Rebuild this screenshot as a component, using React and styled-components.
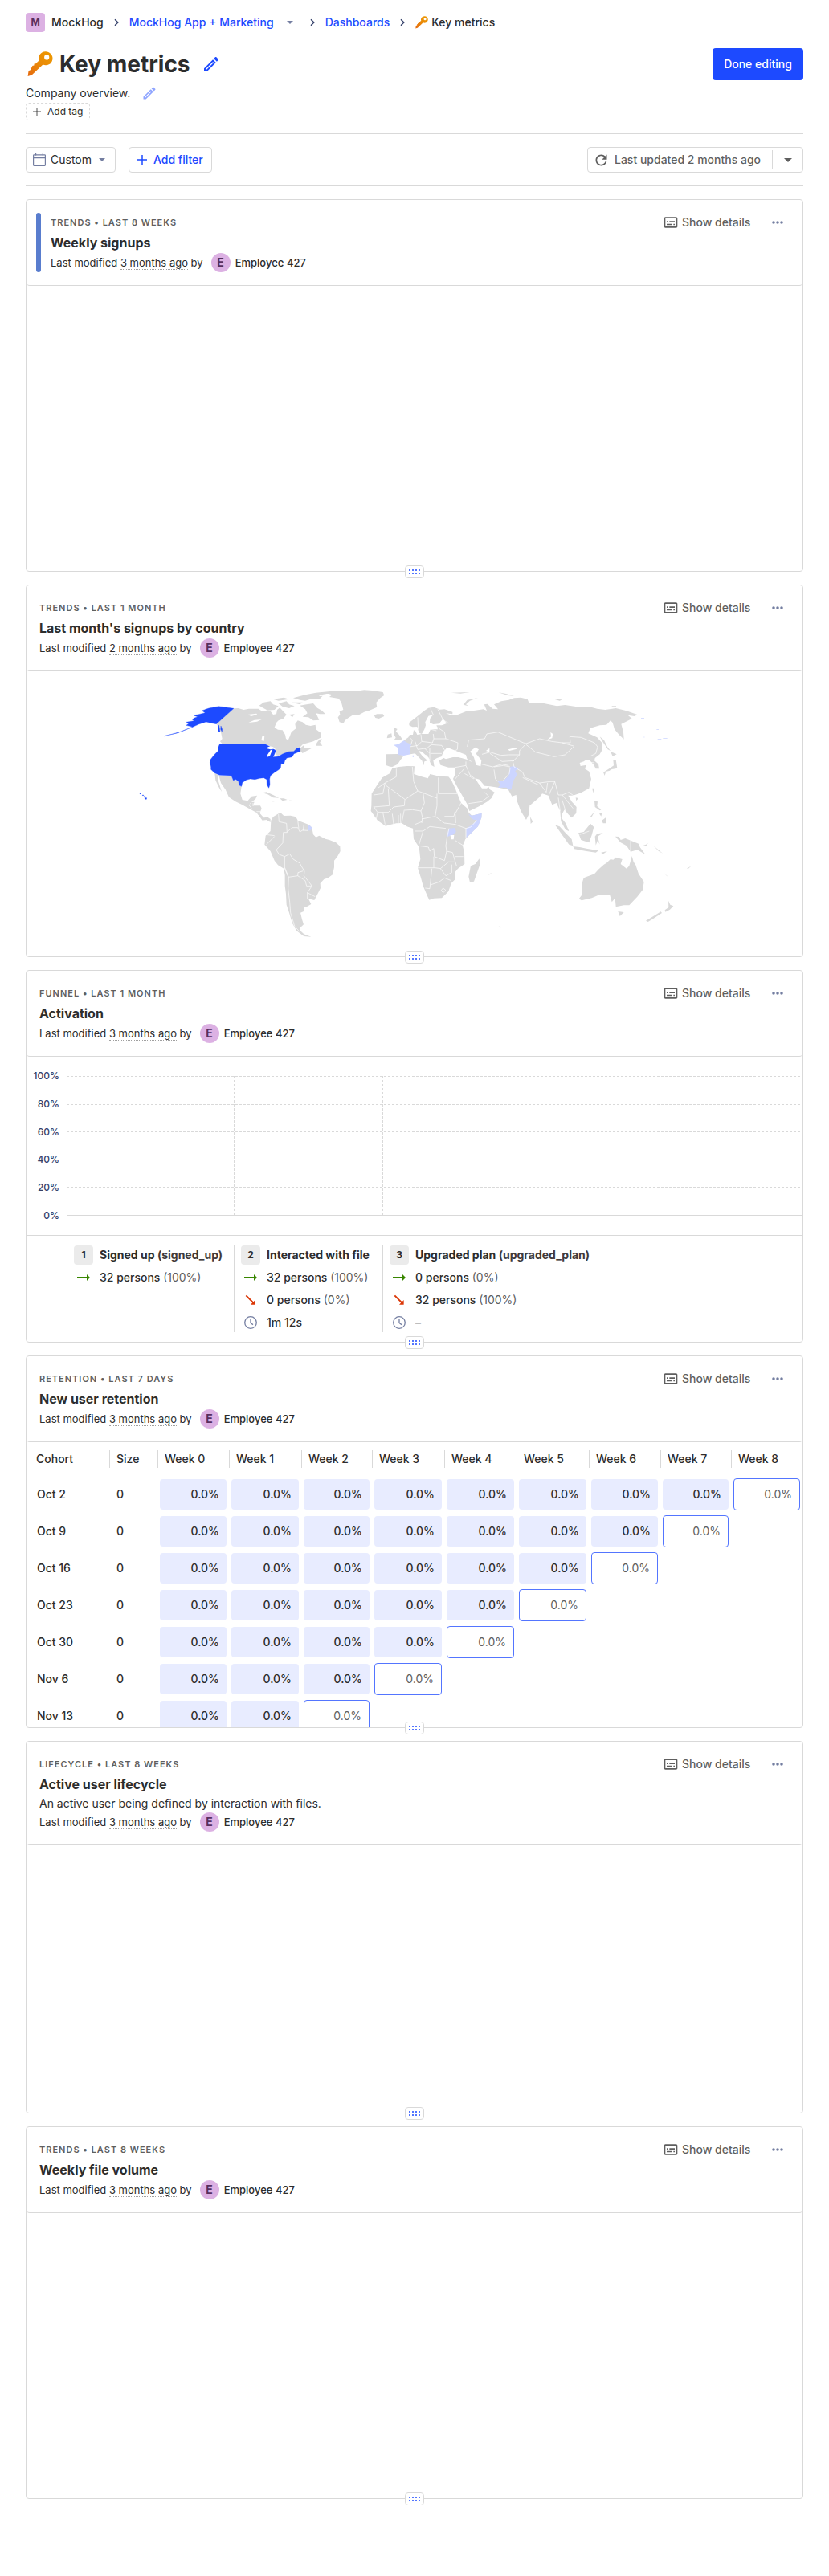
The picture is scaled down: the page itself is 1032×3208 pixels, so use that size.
import React from "react";
import styled, { createGlobalStyle, css } from "styled-components";

const c = {
  text: "#2d2d2d",
  muted: "#5f5f5f",
  blue: "#1d4aff",
  blueLight: "#5375ff",
  mutedAlt: "#35416b",
  icon: "#747ea1",
  border: "#d9d9d9",
  side: "#ebebeb",
  land: "#d9d9d9",
  landLight: "#ccd5ff",
  cell: "#e8ecff",
  lilac: "#dcb1e3",
  lilacDark: "#572e5e",
};

const GlobalStyle = createGlobalStyle`
  *, *::before, *::after { box-sizing: border-box; }
  body {
    margin: 0;
    background: #fff;
    color: ${c.text};
    font-family: Inter, "Liberation Sans", sans-serif;
    font-size: 14px;
    line-height: 20px;
  }
  button {
    font: inherit;
    color: inherit;
    background: none;
    border: 0;
    padding: 0;
    cursor: pointer;
  }
  svg { display: block; flex: none; }
`;

const Page = styled.main`
  padding: 16px 32px 96px;
`;

/* ---------- Breadcrumbs ---------- */

const Breadcrumbs = styled.nav`
  display: flex;
  align-items: center;
  gap: 8px;
  height: 24px;
  margin-bottom: 20px;
  font-weight: 500;
  color: ${c.mutedAlt};
`;

const Crumb = styled.span`
  display: flex;
  align-items: center;
  gap: 4px;
  color: ${c.text};
`;

const CrumbLink = styled.a`
  color: ${c.blue};
  text-decoration: none;
`;

const CaretButton = styled.button`
  display: flex;
  justify-content: center;
  width: 24px;
  color: ${c.icon};
`;

const Avatar = styled.span`
  display: inline-flex;
  flex: none;
  align-items: center;
  justify-content: center;
  width: 24px;
  height: 24px;
  border-radius: ${(p) => (p.$square ? "4px" : "50%")};
  background: ${c.lilac};
  color: ${c.lilacDark};
  font-size: ${(p) => (p.$square ? "12px" : "14px")};
  font-weight: 700;
`;

/* ---------- Page header ---------- */

const PageHeader = styled.header`
  padding-bottom: 16px;
  border-bottom: 1px solid ${c.border};
`;

const TitleRow = styled.div`
  display: flex;
  align-items: center;
  gap: 14px;
  height: 40px;
`;

const Title = styled.h1`
  display: flex;
  align-items: center;
  gap: 8px;
  margin: 0;
  padding-left: 2px;
  font-size: 28px;
  line-height: 40px;
  font-weight: 700;
`;

const IconButton = styled.button`
  display: flex;
  color: ${(p) => (p.$soft ? "#8ea4ff" : c.blue)};
`;

const PrimaryButton = styled.button`
  height: 40px;
  min-width: 113px;
  margin-left: auto;
  padding: 0 12px;
  border-radius: 4px;
  background: ${c.blue};
  color: #fff;
  font-weight: 500;
`;

const Description = styled.div`
  display: flex;
  align-items: center;
  gap: 14px;
  height: 24px;
  margin-top: 4px;
`;

const TagButton = styled.button`
  display: flex;
  align-items: center;
  gap: 8px;
  height: 22px;
  padding: 0 8px;
  border: 1px dashed ${c.border};
  border-radius: 4px;
  font-size: 12px;
`;

/* ---------- Toolbar ---------- */

const Toolbar = styled.section`
  display: flex;
  gap: 16px;
  padding: 16px 0;
  margin-bottom: 16px;
  border-bottom: 1px solid ${c.border};
`;

const ToolButton = styled.button`
  display: flex;
  align-items: center;
  gap: 6px;
  height: 32px;
  min-width: 112px;
  padding: 0 12px 0 8px;
  border: 1px solid ${c.border};
  border-radius: 4px;
  ${(p) =>
    p.$accent &&
    css`
      gap: 8px;
      min-width: 104px;
      padding: 0 8px 0 10px;
      color: ${c.blue};
      font-weight: 500;
    `}
`;

const Tinted = styled.span`
  display: flex;
  margin-left: ${(p) => (p.$end ? "auto" : "0")};
  color: ${c.icon};
`;

const SplitButton = styled.div`
  display: flex;
  align-items: center;
  height: 32px;
  min-width: 269px;
  margin-left: auto;
  border: 1px solid ${c.border};
  border-radius: 4px;
  color: ${c.muted};
  font-weight: 500;
`;

const SplitMain = styled.button`
  display: flex;
  flex: 1;
  align-items: center;
  gap: 6px;
  padding: 0 8px 0 6px;
`;

const SplitSide = styled.button`
  display: flex;
  align-items: center;
  justify-content: center;
  width: 38px;
  height: 24px;
  border-left: 1px solid ${c.border};
`;

/* ---------- Cards ---------- */

const Cards = styled.div`
  display: grid;
  gap: 16px;
`;

const Card = styled.article`
  position: relative;
  display: flex;
  flex-direction: column;
  height: 464px;
  min-width: 0;
  border: 1px solid ${c.border};
  border-radius: 4px;
`;

const CardHeader = styled.header`
  display: flex;
  gap: 12px;
  padding: 16px;
  padding-left: ${(p) => (p.$ribbon ? "12px" : "16px")};
  border-bottom: 1px solid ${c.border};
  border-radius: 4px;
`;

const Ribbon = styled.div`
  width: 6px;
  border-radius: 3px;
  background: #597dce;
`;

const CardInfo = styled.div`
  flex: 1;
  min-width: 0;
`;

const MetaRow = styled.div`
  display: flex;
  align-items: center;
  justify-content: space-between;
  height: 24px;
`;

const Meta = styled.h5`
  margin: 0;
  color: ${c.muted};
  font-size: 11px;
  font-weight: 600;
  letter-spacing: 1px;
  text-transform: uppercase;
`;

const CardActions = styled.div`
  display: flex;
  align-items: center;
  gap: 22px;
  padding-right: 8px;
`;

const DetailsButton = styled.button`
  display: flex;
  align-items: center;
  gap: 4px;
  min-width: 114px;
  color: ${c.muted};
  font-weight: 500;
`;

const MoreButton = styled.button`
  display: flex;
  color: ${c.icon};
`;

const CardTitle = styled.h4`
  margin: 0;
  font-size: 16px;
  line-height: 26px;
  font-weight: 700;
`;

const CardDescription = styled.p`
  margin: 0;
  line-height: 22px;
`;

const Modified = styled.div`
  display: flex;
  align-items: center;
  gap: 10px;
  height: 24px;
  font-size: 13px;
`;

const Ago = styled.span`
  border-bottom: 1px dotted #a0a0a0;
`;

const Author = styled.span`
  display: flex;
  align-items: center;
  gap: 6px;
  font-weight: 500;
`;

const CardBody = styled.div`
  flex: 1;
  min-height: 0;
  overflow: hidden;
`;

const Handle = styled.button`
  position: absolute;
  left: calc(50% - 12px);
  bottom: -9px;
  display: grid;
  place-items: center;
  width: 24px;
  height: 16px;
  border: 1px solid ${c.border};
  border-radius: 4px;
  background: #fff;
  color: ${c.blueLight};
`;

/* ---------- Funnel ---------- */

const funnelColumns = "50px 208px 185px 1fr";

const FunnelChart = styled.div`
  display: grid;
  grid-template-columns: 50px 1fr;
  border-bottom: 1px solid ${c.border};
`;

const Axis = styled.div`
  display: flex;
  flex-direction: column;
  justify-content: space-between;
  padding: 16px 9px 16px 0;
  color: ${c.mutedAlt};
  font-size: 12px;
  line-height: 16px;
  font-weight: 500;
  text-align: right;
`;

const Plot = styled.div`
  padding: 24px 0;
`;

const Legend = styled.div`
  display: grid;
  grid-template-columns: ${funnelColumns};
  padding: 12px 0;
`;

const Step = styled.section`
  display: grid;
  align-content: start;
  gap: 4px;
  padding-left: 8px;
  border-left: 1px solid ${c.border};
  white-space: nowrap;
`;

const StepRow = styled.div`
  display: flex;
  align-items: center;
  gap: 8px;
  height: 24px;
  font-weight: ${(p) => (p.$head ? 700 : 500)};
`;

const StepNumber = styled.span`
  display: flex;
  align-items: center;
  justify-content: center;
  width: 24px;
  height: 24px;
  border-radius: 4px;
  background: ${c.side};
  font-size: 12px;
`;

const Share = styled.span`
  color: ${c.muted};
  font-weight: 400;
`;

const EventKey = styled.span`
  color: #403939;
`;

/* ---------- Retention ---------- */

const RetentionTable = styled.table`
  width: 100%;
  table-layout: fixed;
  border-collapse: collapse;
  font-weight: 500;
`;

const HeadCell = styled.th`
  height: 42px;
  padding: 0;
  font-weight: 500;
  text-align: left;
`;

const HeadLabel = styled.div`
  height: 22px;
  padding-left: ${(p) => (p.$first ? 12 : 8)}px;
  border-left: ${(p) => (p.$first ? "0" : `1px solid ${c.border}`)};
  line-height: 22px;
`;

const LabelCell = styled.td`
  height: 46px;
  padding: 0 0 0 ${(p) => (p.$first ? 13 : 9)}px;
`;

const ValueCell = styled.td`
  height: 46px;
  padding: 0 3px;
`;

const Value = styled.div`
  height: 38px;
  padding: 0 9px;
  border-radius: 4px;
  background: ${c.cell};
  line-height: 38px;
  text-align: right;
  ${(p) =>
    p.$ongoing &&
    css`
      height: 40px;
      border: 1px solid ${c.blueLight};
      background: #fff;
      color: ${c.muted};
      font-weight: 400;
    `}
`;

/* ---------- Icons ---------- */

const Key = ({ size }) => (
  <svg width={size} height={size} viewBox="0 0 32 32" role="img" aria-label="Key">
    <defs>
      <linearGradient id={`key-${size}`} x1="1" y1="0" x2="0" y2="1">
        <stop offset="0" stopColor="#ed9a00" />
        <stop offset="0.5" stopColor="#ea8a08" />
        <stop offset="1" stopColor="#e5690f" />
      </linearGradient>
    </defs>
    <path
      fill={`url(#key-${size})`}
      fillRule="evenodd"
      d="M22.500 .3a8.500 8.500 0 0 0-8 11.300L10.600 15.200 8.600 15.600 8.400 17.500 6.200 18 6 20 3.800 20.800 4.400 23 1.600 24.200.6 30.900 5.600 29.600 19.400 16.500a8.500 8.500 0 1 0 3.100-16.200zM24.200 4.300a3.100 3.100 0 1 1 0 6.200 3.100 3.100 0 0 1 0-6.200z"
    />
  </svg>
);

const Chevron = () => (
  <svg width="16" height="16" viewBox="0 0 16 16" fill="none" stroke="currentColor" strokeWidth="1.5" aria-hidden="true">
    <path d="M6 4.2 9.8 8 6 11.8" />
  </svg>
);

const Caret = ({ size = 8 }) => (
  <svg width={size} height={size / 2} viewBox="0 0 8 4" fill="currentColor" aria-hidden="true">
    <path d="M0 0h8L4 4z" />
  </svg>
);

const Pencil = ({ size }) => (
  <svg width={size} height={size} viewBox="0 0 24 24" fill="currentColor" aria-hidden="true">
    <path d="m14.06 9.02.92.92L5.92 19H5v-.92l9.06-9.06M17.66 3c-.25 0-.51.1-.7.29l-1.83 1.83 3.75 3.75 1.83-1.83a.996.996 0 0 0 0-1.41l-2.34-2.34c-.2-.2-.45-.29-.71-.29zm-3.6 3.19L3 17.25V21h3.75L17.81 9.94l-3.75-3.75z" />
  </svg>
);

const Plus = ({ size = 12, width = 1.5 }) => (
  <svg width={size} height={size} viewBox="0 0 12 12" fill="none" stroke="currentColor" strokeWidth={width} aria-hidden="true">
    <path d="M6 0v12M0 6h12" />
  </svg>
);

const Calendar = () => (
  <svg width="16" height="16" viewBox="0 0 16 16" fill="none" stroke="currentColor" strokeWidth="1.2" aria-hidden="true">
    <rect x="0.6" y="1.8" width="14.8" height="13.6" rx="0.8" />
    <path d="M.6 5.6h14.8M3.6 0v2.4M12.4 0v2.4" />
  </svg>
);

const Refresh = () => (
  <svg width="21" height="21" viewBox="0 0 24 24" fill="currentColor" aria-hidden="true">
    <path d="M17.65 6.35C16.2 4.9 14.21 4 12 4c-4.42 0-7.99 3.58-7.99 8s3.57 8 7.99 8c3.73 0 6.84-2.55 7.73-6h-2.08c-.82 2.33-3.04 4-5.65 4-3.31 0-6-2.69-6-6s2.69-6 6-6c1.66 0 3.14.69 4.22 1.78L13 11h7V4l-2.35 2.35z" />
  </svg>
);

const Subtitles = () => (
  <svg width="20" height="20" viewBox="0 0 24 24" fill="currentColor" aria-hidden="true">
    <path d="M20 4H4c-1.100 0-2 .9-2 2v12c0 1.100.9 2 2 2h16c1.100 0 2-.9 2-2V6c0-1.100-.9-2-2-2zm0 14H4V6h16v12zM6 10h2v2H6zm0 4h8v2H6zm10 0h2v2h-2zm-6-4h8v2h-8z" />
  </svg>
);

const Ellipsis = () => (
  <svg width="14" height="4" viewBox="0 0 14 4" fill="currentColor" aria-hidden="true">
    <circle cx="2" cy="2" r="1.8" />
    <circle cx="7" cy="2" r="1.8" />
    <circle cx="12" cy="2" r="1.8" />
  </svg>
);

const Arrow = ({ down }) => (
  <svg width="24" height="24" viewBox="0 0 24 24" fill={down ? "#db3707" : "#388600"} aria-hidden="true">
    <path transform={down ? "rotate(45 12 12)" : undefined} d="M16.01 11H4v2h12.01v3L20 12l-3.99-4z" />
  </svg>
);

const Clock = () => (
  <svg width="24" height="24" viewBox="0 0 24 24" fill="none" stroke={c.icon} strokeWidth="1.3" aria-hidden="true">
    <circle cx="12" cy="12" r="7.3" />
    <path d="M12 7.800v4.700l3 2.100" />
  </svg>
);

const GripDots = () => (
  <svg width="14" height="6" viewBox="0 0 14 6" fill="currentColor" aria-hidden="true">
    {[0, 4, 8, 12].map((x) => (
      <React.Fragment key={x}>
        <rect x={x} y="0" width="2" height="2" />
        <rect x={x} y="4" width="2" height="2" />
      </React.Fragment>
    ))}
  </svg>
);

/* ---------- World map ---------- */

const MapSvg = styled.svg`
  width: 100%;
  height: 100%;
`;

const west = [
  // Canada
  "M393,127 L410,126 430,132 450,128 470,128 485,128 500,138 515,134 530,137 540,150 552,148 555,132 565,124 580,140 590,150 578,165 560,172 552,180 545,198 558,206 575,208 585,225 588,240 596,245 602,232 608,215 625,202 622,185 632,172 650,178 662,188 680,192 698,188 700,205 718,218 720,235 690,250 660,258 650,262 640,272 632,272 617,287 598,288 575,297 560,304 550,300 552,288 545,275 530,268 512,261 352,261 342,250 350,240 345,215 333,190 328,185 Z",
  // Arctic islands
  "M640,116 L665,112 690,108 705,125 722,135 735,148 715,148 700,145 712,170 690,172 672,160 650,158 668,145 660,130 Z",
  "M488,116 L505,104 530,100 540,112 560,118 545,132 520,134 500,124 Z",
  "M615,88 L660,76 700,68 760,62 785,64 720,76 700,86 660,98 640,95 Z",
  "M560,108 L590,100 600,112 620,118 600,126 575,120 Z M540,92 L580,86 600,92 560,98 Z M610,104 L650,104 640,112 Z M600,150 L620,148 612,160 Z M665,84 L725,80 715,90 680,92 Z",
  // Atlantic provinces
  "M703,256 L712,244 722,240 715,254 724,266 700,266 Z M641,275 L655,264 655,276 683,276 660,288 650,294 641,286 Z",
  // Greenland
  "M733,68 L770,64 800,60 850,62 880,58 910,60 950,66 955,78 940,88 925,105 928,122 900,134 880,140 858,152 840,150 820,163 808,172 803,182 788,178 782,160 790,150 788,138 802,132 795,105 785,90 750,84 760,76 Z",
  "M917,152 L928,148 950,148 955,156 935,165 922,162 Z",
  // Mexico and Central America
  "M322,370 L340,378 384,380 392,395 398,393 410,400 414,414 422,418 418,445 425,468 445,472 460,455 480,452 474,466 462,474 455,480 450,488 425,487 400,475 375,458 362,430 345,405 338,380 332,378 336,400 348,438 338,422 325,395 Z",
  "M425,487 L450,488 460,476 470,476 465,490 492,490 497,500 490,518 505,535 520,533 530,540 530,552 515,543 500,545 478,516 445,498 Z",
  "M500,442 L515,439 540,450 562,461 540,460 520,448 Z M565,463 L580,463 593,468 575,472 Z M600,470h8v3h-8Z M534,472h10v3h-10Z",
  // South America
  "M532,545 L540,532 560,520 570,518 580,528 605,527 625,532 632,545 650,552 675,562 685,572 690,598 700,608 712,602 735,614 750,618 775,628 790,642 791,660 780,680 768,695 768,720 762,748 745,760 730,765 716,780 717,798 705,822 694,843 672,838 682,858 665,868 655,870 656,884 642,890 648,915 654,934 642,945 642,958 655,970 682,980 655,978 628,958 612,930 600,890 590,860 588,820 584,790 584,750 580,725 558,712 545,695 530,660 508,635 512,602 530,585 Z",
];

const westBorders =
  "M575,630 L552,655 562,672 583,680 602,670 615,690 640,705 645,715 657,735 655,752 668,768 685,790 668,815 697,830 M668,815 V838 M560,522 L562,550 590,556 592,590 578,590 576,630 M545,602 L512,598 M515,635 L545,605 M592,588 L612,572 632,572 640,588 650,582 672,583 M632,545 L636,575 M655,560 L652,583 M672,562 L670,583 M583,680 V720 L598,757 632,752 633,740 652,734 M582,722 L598,760 596,800 602,850 605,890 620,940 640,962 M632,752 L660,770 665,790 685,790 M450,488 L460,500 M465,480 V492 M478,512 H492";

const usa = [
  "M340,261 L512,261 525,268 540,277 550,284 545,298 540,308 560,306 575,297 598,288 617,287 628,276 641,272 641,287 618,296 611,308 591,312 584,322 580,335 570,332 568,348 562,355 545,366 530,378 527,390 528,412 524,424 517,412 516,392 505,386 490,388 472,392 455,390 440,394 425,404 422,418 414,414 410,398 398,391 392,397 384,378 340,376 322,368 308,355 308,345 304,330 306,318 320,300 335,285 336,270 Z",
  "M393,127 L360,122 337,119 300,126 274,135 286,143 262,149 243,153 258,158 245,163 238,168 244,173 216,178 225,183 216,190 240,196 262,186 290,177 312,182 328,185 Z",
  "M240,196 L210,207 185,218 133,230 165,222 200,212 Z M334,190 L338,190 342,214 336,212 Z M345,192 L350,205 349,214 344,205 Z M60,460 L68,461 67,466 62,466 Z M42,444h4v2h-4Z M52,450h4v2h-4Z M59,454h3v3h-3Z",
];

const westWater =
  "M512,275 L525,269 538,270 550,277 530,280 Z M530,283 L538,280 528,304 520,308 519,300 Z M445,150 L478,146 480,150 458,156 Z M448,180 L470,170 497,168 480,176 Z M500,228 L508,228 506,248 496,246 Z";

const east = [
  // Africa
  "M-35,350 L-10,345 20,342 48,343 46,372 70,380 98,388 106,372 140,380 175,382 186,395 200,425 212,455 222,480 245,500 250,515 262,527 299,518 298,535 285,568 255,597 238,615 228,640 234,665 235,708 210,725 198,740 200,765 185,780 175,810 150,835 120,836 103,842 95,825 80,790 72,760 60,722 70,690 65,645 45,615 42,575 20,568 0,555 -20,556 -45,562 -60,566 -90,545 -115,510 -113,490 -112,445 -90,410 -72,385 -45,370 Z",
  "M290,688 L293,708 270,773 255,776 250,755 258,715 275,708 Z",
  // Iberia
  "M-57,298 L-15,297 8,303 -5,320 -15,335 -35,345 -44,344 -60,338 Z",
  // Eurasia
  "M8,247 L25,235 30,225 42,225 45,208 52,212 58,225 75,222 100,222 108,205 135,205 130,190 108,190 150,190 168,183 150,160 135,132 160,130 190,140 190,148 165,145 185,152 210,150 240,138 270,135 290,132 305,130 318,135 308,112 320,110 340,128 360,130 345,112 372,100 400,95 420,88 445,86 470,92 475,105 520,106 550,112 580,118 610,114 650,120 700,120 730,128 760,132 800,126 840,136 880,150 870,156 845,152 860,165 835,178 820,185 828,215 830,242 812,225 795,205 788,180 780,172 765,188 740,190 705,200 697,220 730,235 748,255 750,280 740,298 722,312 720,322 735,335 738,352 725,352 718,338 700,318 690,318 680,325 665,330 668,342 690,338 684,352 700,362 708,390 700,425 670,442 655,447 640,452 622,452 635,475 653,495 652,518 635,535 622,522 608,505 600,520 596,535 612,555 625,585 612,580 595,548 592,510 578,480 562,487 548,452 525,445 515,458 478,490 474,525 465,543 445,510 430,470 428,450 412,455 398,430 360,422 330,418 310,416 290,392 275,388 285,405 300,425 318,425 325,420 330,430 347,440 335,462 320,475 290,492 253,510 245,485 225,450 205,415 192,390 200,372 200,347 175,347 145,338 140,322 160,310 210,308 245,318 240,300 170,272 155,290 150,306 132,312 118,320 122,345 110,338 100,310 75,288 62,285 78,305 97,322 85,325 82,340 76,322 50,295 33,298 Z",
  // Scandinavia
  "M28,180 L60,155 85,135 100,125 120,122 140,130 155,165 140,184 118,186 105,180 106,165 118,150 100,155 88,178 90,190 85,205 75,222 65,218 58,195 40,196 28,190 Z",
  // British Isles
  "M-28,198 L-16,204 -22,212 -12,222 -2,235 2,242 -30,246 -22,236 -30,222 Z M-52,224 L-38,220 -36,235 -55,238 Z",
  // Novaya Zemlya and Arctic specks
  "M230,113 L245,95 285,87 255,98 240,112 250,118 Z M362,67 L390,72 420,80 395,78 Z M570,92 L600,94 590,98 Z M785,118 h16 v3 h-16 Z M185,68 L255,66 220,71 Z",
  // Japan, Sakhalin
  "M740,232 L756,245 768,270 780,285 770,280 750,250 Z M780,288 L803,298 788,305 Z M790,318 L800,318 805,350 785,354 775,360 756,364 775,352 792,340 Z M752,362 L762,365 758,378 Z",
  // South and Southeast Asia islands
  "M480,532 L490,550 482,558 Z M712,425 L719,425 715,443 Z M650,460 L660,462 652,472 Z M720,472 L732,475 730,492 745,505 740,508 722,495 Z M748,545 L762,535 764,556 752,556 Z M738,520 L748,518 745,530 Z M705,530 L722,510 708,535 Z",
  "M573,562 L590,568 612,592 635,615 640,640 625,635 600,600 Z M640,642 L665,645 690,650 735,658 725,665 690,660 645,652 Z M660,592 L680,588 705,557 718,570 710,600 700,628 670,618 Z M722,605 L730,595 752,592 732,605 740,635 732,620 725,638 Z M745,665 L768,660 750,672 Z",
  // New Guinea
  "M798,605 L812,606 818,618 835,612 885,632 890,645 910,672 880,655 855,662 840,640 818,628 Z M900,640 L920,632 922,628 912,642 Z M980,742 L995,755 990,752 Z M1065,725 L1082,715 1070,726 Z M940,640 L975,668 960,660 Z",
  // Australia and New Zealand
  "M672,785 L680,760 720,745 735,728 755,710 765,704 780,690 790,692 800,683 824,690 818,708 840,725 850,715 860,678 866,700 874,712 885,745 905,775 900,805 880,830 850,862 830,862 800,868 797,835 785,850 778,825 740,822 710,835 672,844 662,838 672,825 Z",
  "M808,885 L830,888 815,903 Z M996,845 L1003,860 1015,865 1002,878 985,887 983,880 997,870 Z M968,886 L972,891 940,912 920,924 912,920 Z M362,940 L372,945 368,946 Z M322,748 L338,740 328,748 Z",
];

const eastBorders = [
  // Africa
  "M-20,352 V382 L-62,405 -90,425 M-62,412 L13,467 60,435 45,400 40,345 M-62,405 L-70,445 -105,450 M-50,425 L-46,490 -105,495 M-105,492 L-90,515 -50,515 -30,495 10,490 12,467 M60,435 L132,462 M137,385 V445 H208 M132,445 V490 L125,530 160,555 200,560 240,575 M80,440 L85,480 72,510 40,505 12,507 M72,510 L78,535 75,555 M75,540 L125,530 M50,560 L75,550 M222,480 L200,520 202,555 M160,530 H195 L200,510 M280,545 L258,570 240,575 V610 M50,585 H80 L105,568 165,575 M80,585 L65,635 M177,575 L170,606 165,640 168,660 190,665 M65,640 L100,645 105,660 120,650 122,680 160,695 168,660 M60,722 L125,722 145,725 175,700 200,700 M200,680 L230,680 M200,620 L232,640 M120,680 V722 M113,725 L105,800 88,798 M110,785 L140,775 160,760 185,770 M145,725 L165,752 187,740 V710 M155,798 L165,806 155,815 147,807 Z M190,665 L205,715 M-90,515 L-95,540 M-70,515 L-62,560 M-35,520 L-30,560 M-12,525 V555 M-4,520 V555 M10,505 L0,555",
  // Europe
  "M30,270 L60,265 75,250 72,225 M75,250 L115,255 120,240 118,222 M60,280 L95,275 110,262 150,265 165,290 M120,240 L165,240 210,255 208,280 190,290 M105,275 L105,320 M110,295 H150 M60,160 L62,205 M108,128 L118,150 M135,130 L155,170 175,182 M130,195 L160,215 165,240 M35,262 L40,245 30,235 M50,250 L60,280 M85,275 L105,295 M90,300 L110,325 M110,205 L130,210",
  // Asia
  "M245,270 L250,245 310,240 318,222 360,215 400,232 455,255 465,258 440,285 440,300 400,300 370,302 330,290 300,298 M465,258 L515,240 560,250 600,255 645,268 610,300 570,307 500,290 465,262 M600,255 L630,255 628,232 670,235 720,255 732,270 725,295 705,305 M440,300 L415,325 420,345 452,365 460,385 515,405 555,400 572,400 585,450 600,450 625,440 645,455 M452,385 L510,412 M515,405 L540,440 M545,405 L540,440 M572,400 L550,450 M585,460 L592,510 M600,450 L620,475 640,500 M600,470 L612,510 M298,335 L340,345 375,335 400,340 M330,295 L375,325 M345,355 L350,390 360,400 M200,347 L240,340 255,375 275,390 M200,390 L235,350 M235,370 L270,390 M250,482 L300,475 325,455 310,440 M345,345 L380,340 405,345 M225,305 L260,325 M240,325 L240,340 M375,325 L420,322 M705,328 L720,330 M855,618 V660 M665,598 L700,585 M380,395 L402,370 405,350",
].join(" ");

const eastWater =
  "M150,308 L155,288 172,278 190,285 200,293 225,298 224,310 195,308 165,316 Z M256,287 L275,272 288,280 278,296 298,320 295,343 278,338 270,310 Z M398,280 L425,273 430,278 402,285 Z M545,243 L558,232 556,216 565,222 562,238 Z M182,600 L196,600 194,616 184,616 Z M315,285 L328,275 328,290 Z";

const eastHighlights =
  "M-15,300 L-12,275 -30,263 -12,260 8,247 20,254 36,262 30,278 33,298 8,303 Z M250,522 L262,527 299,518 298,535 285,568 255,597 241,610 V575 L258,565 282,545 262,540 Z M177,575 L200,573 203,588 190,600 170,606 172,590 Z M405,345 L420,342 437,352 424,360 431,375 415,400 410,430 398,430 392,422 360,422 368,412 358,398 382,395 400,378 Z M41,302 h4 v6 h-4 Z M894,162 h12 v2 h-12 Z M952,205 h8 v2 h-8 Z M956,240 h14 v2 h-14 Z M976,237 h16 v2 h-16 Z M900,233 h8 v2 h-8 Z";

const WorldMap = () => (
  <MapSvg viewBox="33 836 966 355" role="img" aria-label="Signups by country">
    <g transform="translate(160 840) scale(.33333)">
      <path d={west.join(" ")} fill={c.land} />
      <path d={usa.join(" ")} fill={c.blue} stroke={c.blue} strokeWidth="1" />
      <path d={westWater} fill="#fff" />
      <path d={westBorders} fill="none" stroke="#fff" strokeWidth="2" />
      <path d="M673,562 L686,572 680,583 670,583 Z" fill={c.landLight} />
    </g>
    <g transform="translate(500 840) scale(.33333)">
      <path d={east.join(" ")} fill={c.land} />
      <path d={eastHighlights} fill={c.landLight} />
      <path d={eastWater} fill="#fff" />
      <path d={eastBorders} fill="none" stroke="#fff" strokeWidth="2" />
    </g>
  </MapSvg>
);

/* ---------- Funnel ---------- */

const GRID_HEIGHT = 174;

const steps = [
  { name: "Signed up", key: "(signed_up)", rows: [["in", "32 persons", "(100%)"]] },
  {
    name: "Interacted with file",
    rows: [
      ["in", "32 persons", "(100%)"],
      ["out", "0 persons", "(0%)"],
      ["time", "1m 12s"],
    ],
  },
  {
    name: "Upgraded plan",
    key: "(upgraded_plan)",
    rows: [
      ["in", "0 persons", "(0%)"],
      ["out", "32 persons", "(100%)"],
      ["time", "–"],
    ],
  },
];

const Funnel = () => (
  <>
    <FunnelChart>
      <Axis>
        {[100, 80, 60, 40, 20, 0].map((v) => (
          <span key={v}>{v}%</span>
        ))}
      </Axis>
      <Plot>
        <svg width="100%" height={GRID_HEIGHT} stroke={c.border} shapeRendering="crispEdges" aria-hidden="true">
          {[0, 35, 69, 104, 138].map((y) => (
            <line key={y} x1="0" x2="100%" y1={y + 0.5} y2={y + 0.5} strokeDasharray="3 2" />
          ))}
          <line x1="0" x2="100%" y1="173.5" y2="173.5" />
          <line x1="208.5" x2="208.5" y1="0" y2={GRID_HEIGHT} strokeDasharray="3 2" />
          <line x1="393.5" x2="393.5" y1="0" y2={GRID_HEIGHT} strokeDasharray="3 2" />
        </svg>
      </Plot>
    </FunnelChart>
    <Legend>
      <div />
      {steps.map((s, i) => (
        <Step key={s.name}>
          <StepRow $head>
            <StepNumber>{i + 1}</StepNumber>
            <span>
              {s.name} {s.key && <EventKey>{s.key}</EventKey>}
            </span>
          </StepRow>
          {s.rows.map(([kind, label, share]) => (
            <StepRow key={kind}>
              {kind === "time" ? <Clock /> : <Arrow down={kind === "out"} />}
              <span>
                {label} {share && <Share>{share}</Share>}
              </span>
            </StepRow>
          ))}
        </Step>
      ))}
    </Legend>
  </>
);

/* ---------- Retention ---------- */

const columnWidths = [103, 60, 89, 90, 88, 90, 90, 90, 89, 88, 89];
const cohorts = ["Oct 2", "Oct 9", "Oct 16", "Oct 23", "Oct 30", "Nov 6", "Nov 13"];

const Retention = () => (
  <RetentionTable>
    <colgroup>
      {columnWidths.map((w, i) => (
        <col key={i} width={w} />
      ))}
    </colgroup>
    <thead>
      <tr>
        <HeadCell>
          <HeadLabel $first>Cohort</HeadLabel>
        </HeadCell>
        <HeadCell>
          <HeadLabel>Size</HeadLabel>
        </HeadCell>
        {Array.from({ length: 9 }, (_, i) => (
          <HeadCell key={i}>
            <HeadLabel>Week {i}</HeadLabel>
          </HeadCell>
        ))}
      </tr>
    </thead>
    <tbody>
      {cohorts.map((name, row) => (
        <tr key={name}>
          <LabelCell $first>{name}</LabelCell>
          <LabelCell>0</LabelCell>
          {Array.from({ length: 9 }, (_, i) => (
            <ValueCell key={i}>{i <= 8 - row && <Value $ongoing={i === 8 - row}>0.0%</Value>}</ValueCell>
          ))}
        </tr>
      ))}
    </tbody>
  </RetentionTable>
);

/* ---------- Page ---------- */

const InsightCard = ({ meta, title, description, ago = "3 months ago", ribbon, children }) => (
  <Card>
    <CardHeader $ribbon={ribbon}>
      {ribbon && <Ribbon />}
      <CardInfo>
        <MetaRow>
          <Meta>{meta}</Meta>
          <CardActions>
            <DetailsButton>
              <Subtitles />
              Show details
            </DetailsButton>
            <MoreButton aria-label="More">
              <Ellipsis />
            </MoreButton>
          </CardActions>
        </MetaRow>
        <CardTitle>{title}</CardTitle>
        {description && <CardDescription>{description}</CardDescription>}
        <Modified>
          <span>
            Last modified <Ago>{ago}</Ago> by
          </span>
          <Author>
            <Avatar>E</Avatar>
            Employee 427
          </Author>
        </Modified>
      </CardInfo>
    </CardHeader>
    <CardBody>{children}</CardBody>
    <Handle aria-label="Resize">
      <GripDots />
    </Handle>
  </Card>
);

export default function App() {
  return (
    <>
      <GlobalStyle />
      <Page>
        <Breadcrumbs aria-label="Breadcrumbs">
          <Avatar $square>M</Avatar>
          <Crumb>MockHog</Crumb>
          <Chevron />
          <CrumbLink href="#project">MockHog App + Marketing</CrumbLink>
          <CaretButton aria-label="Switch project">
            <Caret />
          </CaretButton>
          <Chevron />
          <CrumbLink href="#dashboards">Dashboards</CrumbLink>
          <Chevron />
          <Crumb>
            <Key size={16} />
            Key metrics
          </Crumb>
        </Breadcrumbs>

        <PageHeader>
          <TitleRow>
            <Title>
              <Key size={32} />
              Key metrics
            </Title>
            <IconButton aria-label="Edit name">
              <Pencil size={24} />
            </IconButton>
            <PrimaryButton>Done editing</PrimaryButton>
          </TitleRow>
          <Description>
            Company overview.
            <IconButton $soft aria-label="Edit description">
              <Pencil size={20} />
            </IconButton>
          </Description>
          <TagButton>
            <Plus size={10} width={1} />
            Add tag
          </TagButton>
        </PageHeader>

        <Toolbar>
          <ToolButton>
            <Tinted>
              <Calendar />
            </Tinted>
            Custom
            <Tinted $end>
              <Caret />
            </Tinted>
          </ToolButton>
          <ToolButton $accent>
            <Plus />
            Add filter
          </ToolButton>
          <SplitButton>
            <SplitMain>
              <Refresh />
              Last updated 2 months ago
            </SplitMain>
            <SplitSide aria-label="Refresh options">
              <Caret size={10} />
            </SplitSide>
          </SplitButton>
        </Toolbar>

        <Cards>
          <InsightCard meta="Trends • Last 8 weeks" title="Weekly signups" ribbon />
          <InsightCard meta="Trends • Last 1 month" title="Last month's signups by country" ago="2 months ago">
            <WorldMap />
          </InsightCard>
          <InsightCard meta="Funnel • Last 1 month" title="Activation">
            <Funnel />
          </InsightCard>
          <InsightCard meta="Retention • Last 7 days" title="New user retention">
            <Retention />
          </InsightCard>
          <InsightCard
            meta="Lifecycle • Last 8 weeks"
            title="Active user lifecycle"
            description="An active user being defined by interaction with files."
          />
          <InsightCard meta="Trends • Last 8 weeks" title="Weekly file volume" />
        </Cards>
      </Page>
    </>
  );
}
